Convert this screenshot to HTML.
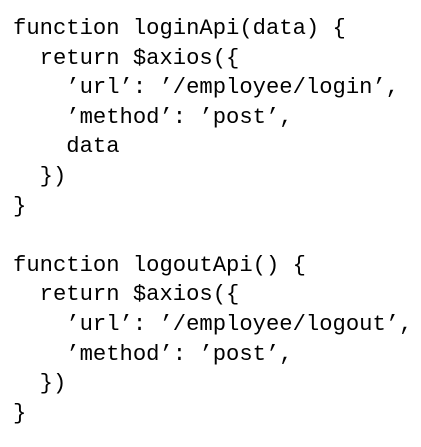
<!DOCTYPE html>
<html><head><meta charset="utf-8"><style>
html,body{margin:0;padding:0;background:#fff;width:421px;height:447px;overflow:hidden}
pre{margin:0;position:absolute;left:13px;top:14px;font-family:"Liberation Mono",monospace;font-size:22.2px;line-height:29.6px;color:#000;letter-spacing:0}
</style></head><body>
<pre>function loginApi(data) {
  return $axios({
    ’url’: ’/employee/login’,
    ’method’: ’post’,
    data
  })
}

function logoutApi() {
  return $axios({
    ’url’: ’/employee/logout’,
    ’method’: ’post’,
  })
}</pre>
</body></html>
